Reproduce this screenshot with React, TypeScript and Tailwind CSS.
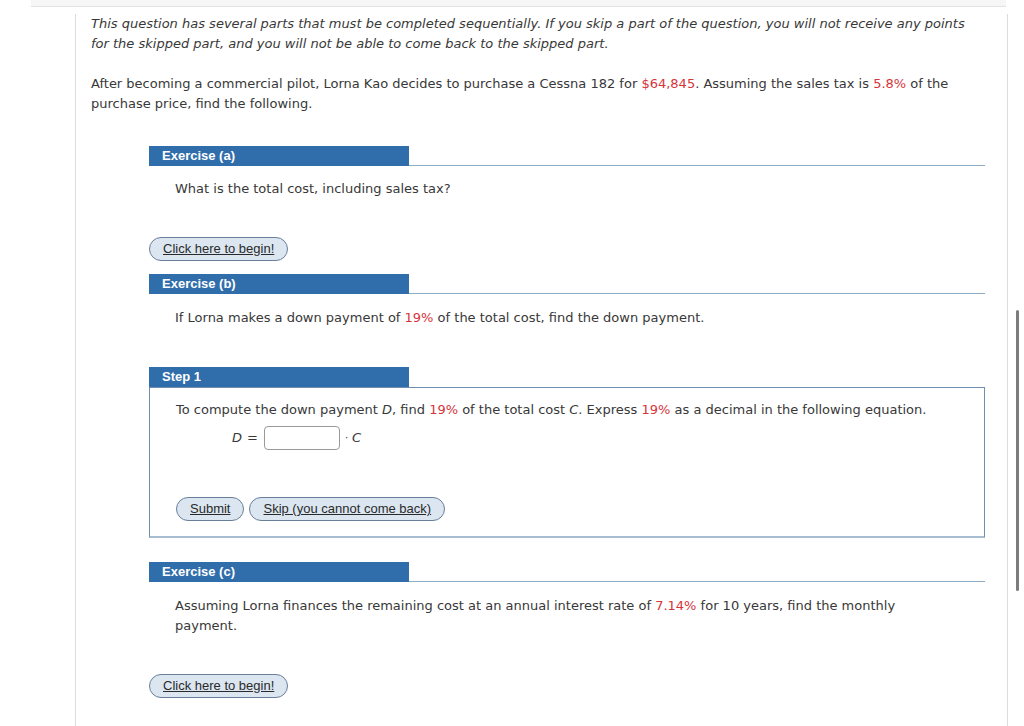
import React from 'react'

const body = "font-['DejaVu_Sans',Verdana,sans-serif] text-[13px] leading-[20px] text-[#383838]"

function Red({ children }: { children: React.ReactNode }) {
    return <span className="text-[#d6343a]">{children}</span>
}

function Header({ title }: { title: string }) {
    return (
        <div className="flex items-end">
            <div className="w-[260px] h-[20px] bg-[#2f6dab] pl-[13px] font-['Liberation_Sans',Arial,sans-serif] font-bold text-[13px] leading-[20px] text-white">
                {title}
            </div>
            <div className="flex-1 border-b border-[#8eabc8]" />
        </div>
    )
}

function PillButton({ children, className = '' }: { children: React.ReactNode; className?: string }) {
    return (
        <button
            className={
                "h-[24px] rounded-full border border-[#687f9a] bg-[#dbe6f1] px-[13px] font-['Liberation_Sans',Arial,sans-serif] text-[13px] leading-[22px] text-[#2a2a2a] underline " +
                className
            }
        >
            {children}
        </button>
    )
}

export default function App() {
    return (
        <div className="relative h-[726px] w-full overflow-hidden bg-white">
            <div className="ml-[31px] h-[7px] w-[975px] border-b border-[#e2e2e2] bg-[#f6f6f6]" />
            <div className="ml-[75px] h-[718px] w-[933px] border-x border-b border-[#dcdcdc] pl-[15px] pr-[35px]">
                <p className={body + ' mt-[7px] italic'}>
                    This question has several parts that must be completed sequentially. If you skip a part of the question, you will not receive any points for the skipped part, and you will not be able to come back to the skipped part.
                </p>
                <p className={body + ' mt-[20px]'}>
                    After becoming a commercial pilot, Lorna Kao decides to purchase a Cessna 182 for <Red>$64,845</Red>. Assuming the sales tax is <Red>5.8%</Red> of the purchase price, find the following.
                </p>

                <div className="ml-[58px] mt-[32px] w-[836px]">
                    <Header title="Exercise (a)" />
                    <p className={body + ' ml-[26px] mt-[13px]'}>What is the total cost, including sales tax?</p>
                    <PillButton className="mt-[38px]">Click here to begin!</PillButton>

                    <div className="mt-[13px]">
                        <Header title="Exercise (b)" />
                    </div>
                    <p className={body + ' ml-[26px] mt-[14px]'}>
                        If Lorna makes a down payment of <Red>19%</Red> of the total cost, find the down payment.
                    </p>

                    <div className="mt-[39px]">
                        <div className="w-[260px] h-[20px] bg-[#2f6dab] pl-[13px] font-['Liberation_Sans',Arial,sans-serif] font-bold text-[13px] leading-[20px] text-white">
                            Step 1
                        </div>
                        <div className="h-[151px] border border-[#6f8fb0] border-b-2 border-b-[#a8bdd2] pl-[26px] pt-[12px]">
                            <p className={body}>
                                To compute the down payment <i>D</i>, find <Red>19%</Red> of the total cost <i>C</i>. Express <Red>19%</Red> as a decimal in the following equation.
                            </p>
                            <div className={body + ' ml-[56px] mt-[6px] flex items-center'}>
                                <i>D</i>
                                <span className="ml-[5px]">=</span>
                                <span className="ml-[6px] h-[24px] w-[76px] rounded-[4px] border border-[#9a9a9a] bg-white" />
                                <span className="ml-[5px] text-[10px]">·</span>
                                <i className="ml-[4px]">C</i>
                            </div>
                            <div className="mt-[47px] flex gap-[5px]">
                                <PillButton>Submit</PillButton>
                                <PillButton>Skip (you cannot come back)</PillButton>
                            </div>
                        </div>
                    </div>

                    <div className="mt-[24px]">
                        <Header title="Exercise (c)" />
                    </div>
                    <p className={body + ' ml-[26px] mt-[14px] pr-[60px]'}>
                        Assuming Lorna finances the remaining cost at an annual interest rate of <Red>7.14%</Red> for 10 years, find the monthly payment.
                    </p>
                    <PillButton className="mt-[38px]">Click here to begin!</PillButton>
                </div>
            </div>
            <div className="absolute right-[5px] top-[310px] h-[281px] w-[3px] rounded-full bg-[#7c7c7c]" />
        </div>
    )
}
